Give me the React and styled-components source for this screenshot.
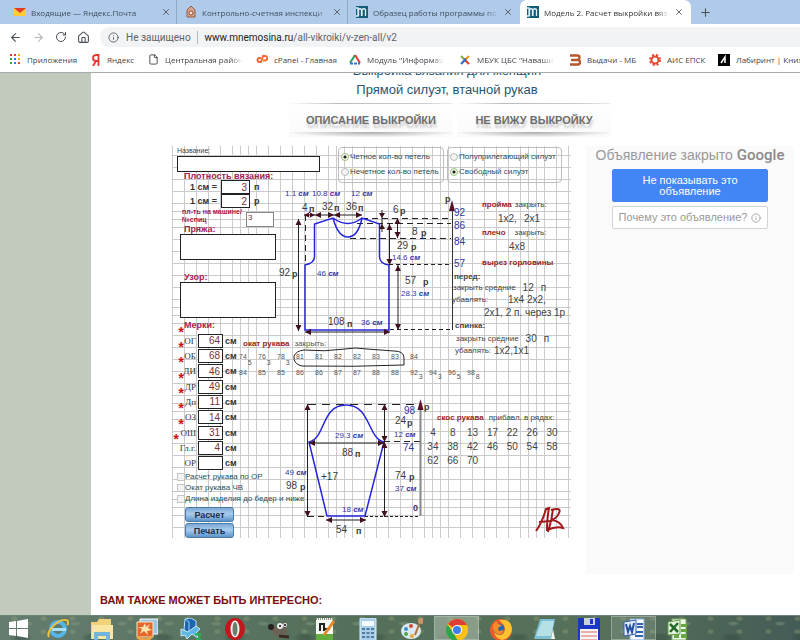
import React from "react";
import styled, { createGlobalStyle, css } from "styled-components";
import { ArrowLeft, ArrowRight, RotateCw, House, Info, X, Plus, File } from "lucide-react";

const Global = createGlobalStyle`
  * { box-sizing: border-box; }
  body { margin: 0; background: #fff; font-family: "Liberation Sans", Arial, sans-serif; }
  button, input, textarea { font-family: inherit; }
`;

/* ---------- browser frame ---------- */
const Window = styled.div`
  display: flex;
  flex-direction: column;
  height: 100vh;
  overflow: hidden;
`;
const TabStrip = styled.nav`
  display: flex;
  flex: 0 0 24px;
  padding-left: 7px;
  background: #afcbe9;
  font-family: "Open Sans", "Noto Sans", sans-serif;
`;
const Tab = styled.div`
  display: flex;
  align-items: center;
  gap: 5px;
  flex: 0 1 171px;
  min-width: 0;
  padding: 0 7px;
  font-size: 8px;
  color: #3f4d5d;
  ${(p) => p.$divider && css`box-shadow: inset -1px 0 #afcbe9, inset -2px 0 #8ea9c6;`}
  ${(p) => p.$active && css`background: #fff; border-radius: 7px 7px 0 0; color: #333;`}
`;
const fade = css`
  overflow: hidden;
  white-space: nowrap;
  mask-image: linear-gradient(to right, #000 calc(100% - 12px), transparent);
`;
const TabTitle = styled.span`
  flex: 1;
  min-width: 0;
  ${fade}
`;
const IconButton = styled.button`
  display: flex;
  align-items: center;
  justify-content: center;
  flex: none;
  padding: 0;
  border: 0;
  background: none;
  color: ${(p) => p.$color || "#4a4f55"};
`;
const NewTab = styled(IconButton)`
  width: 29px;
`;
const Toolbar = styled.div`
  display: flex;
  align-items: center;
  gap: 10px;
  flex: 0 0 25px;
  padding: 1px 0 0 9px;
`;
const Address = styled.div`
  display: flex;
  align-items: center;
  gap: 7px;
  flex: 1;
  height: 20px;
  padding-left: 8px;
  border-radius: 10px 0 0 10px;
  background: #f1f3f4;
  font: 10px Roboto, sans-serif;
  color: #5f6368;
`;
const Security = styled.span`
  padding-right: 6px;
  border-right: 1px solid #b5b8bb;
  line-height: 13px;
`;
const Url = styled.span`
  b { font-weight: 400; color: #222; }
`;
const Bookmarks = styled.nav`
  display: flex;
  align-items: center;
  flex: 0 0 24px;
  padding: 0 0 2px 10px;
  border-bottom: 1px solid #a9abad;
  font-family: "Open Sans", "Noto Sans", sans-serif;
  overflow: hidden;
`;
const Bookmark = styled.a`
  display: flex;
  align-items: center;
  gap: 6px;
  flex: 0 0 ${(p) => p.$w}px;
  min-width: 0;
  padding-right: ${(p) => (p.$fade ? 10 : 0)}px;
  font-size: 8px;
  color: #3f4348;
  text-decoration: none;
  white-space: nowrap;
  svg { flex: none; }
  span { min-width: 0; ${(p) => p.$fade && fade} }
`;

/* ---------- page ---------- */
const Page = styled.div`
  display: flex;
  flex: 1;
  min-height: 0;
  overflow: hidden;
`;
const Side = styled.aside`
  flex: 0 0 91px;
  background: #c1cabd;
`;
const Main = styled.main`
  flex: 1;
  min-width: 0;
  overflow: hidden;
`;
const Title = styled.h1`
  margin: -12px 0 0;
  padding-left: 3px;
  font-size: 13px;
  line-height: 19px;
  font-weight: 400;
  text-align: center;
  color: #265574;
`;
const Actions = styled.div`
  display: flex;
  justify-content: center;
  gap: 4px;
  margin: 4px 0 9px;
  padding-left: 9px;
`;
const Action = styled.a`
  width: ${(p) => p.$w}px;
  height: 34px;
  background:
    linear-gradient(to right, transparent, #bbb 30%, #ccc 80%, #eee) top / 100% 1px no-repeat,
    radial-gradient(ellipse at center top, #aaa, transparent 75%) bottom / 100% 5px no-repeat,
    linear-gradient(#fff, #fafafa);
  font-size: 11px;
  font-weight: 700;
  line-height: 34px;
  text-align: center;
  text-decoration: none;
  color: #6e6e6e;
  text-shadow: 1px 4px 2px #ccc;
`;
const Content = styled.div`
  display: flex;
  align-items: flex-start;
  gap: 15px;
  padding: 0 6px 0 81px;
`;
const More = styled.h2`
  margin: 19px 0 0 9px;
  font-size: 11px;
  line-height: 14px;
  color: #7a0c0c;
`;

const steps = [0, 8, 16, 24, 36, 48, 60, 72, 84];
const ruling = (dir) =>
  `repeating-linear-gradient(${dir}, ${steps
    .map((s, i) => `#cbcbcb ${s}px ${s + 1}px, transparent ${s + 1}px ${steps[i + 1] || 96}px`)
    .join(", ")})`;
const Paper = styled.form`
  display: flex;
  flex: 0 0 399px;
  background-image: ${ruling("to right")}, ${ruling("to bottom")};
  background-position: -36px 0, 0 -39px;
  background-size: 480px 100%, 100% 480px;
`;

/* ---------- form column ---------- */
const Fields = styled.div`
  display: flex;
  flex-direction: column;
  align-items: flex-start;
  flex: 0 0 66px;
  width: 66px;
  padding-left: 5px;
  white-space: nowrap;
  > * { flex: none; }
`;
const boxed = css`
  display: block;
  padding: 0 2px;
  border: 1px solid #222;
  background: #fff;
  color: #7c3038;
  font-size: 10px;
  outline: 0;
  resize: none;
`;
const SmallLabel = styled.label`
  font-size: 7px;
  line-height: 10px;
  color: #444;
`;
const NameInput = styled.input`
  ${boxed}
  width: 143px;
  height: 16px;
`;
const Heading = styled.label`
  padding-top: ${(p) => p.$top || 0}px;
  padding-left: 7px;
  font-size: 9px;
  font-weight: 700;
  line-height: ${(p) => p.$h || 10}px;
  color: #a8204e;
`;
const Density = styled.label`
  display: flex;
  align-items: center;
  gap: 4px;
  height: 14px;
  padding-left: 13px;
  font-size: 9px;
  font-weight: 700;
  color: #333;
`;
const NumberInput = styled.input`
  ${boxed}
  width: ${(p) => p.$w || 25}px;
  height: 14px;
  text-align: right;
`;
const Needles = styled.label`
  display: flex;
  gap: 4px;
  height: 16px;
  padding-left: 5px;
  font-size: 7px;
  font-weight: 700;
  line-height: 8px;
  color: #a8204e;
`;
const NeedleInput = styled.input`
  ${boxed}
  width: 28px;
  height: 15px;
  margin-top: 4px;
  padding: 0 1px 4px;
  border-color: #888;
  font-size: 8px;
`;
const Area = styled.textarea`
  ${boxed}
  width: 96px;
  height: ${(p) => p.$h}px;
  margin-left: 3px;
`;
const Measures = styled.div`
  display: grid;
  grid-auto-rows: 1fr;
  height: 138px;
`;
const Measure = styled.label`
  display: grid;
  grid-template-columns: 19px 25px auto;
  gap: 2px;
  align-items: center;
  font-size: 9px;
  font-weight: 700;
  color: #333;
`;
const MeasureName = styled.span`
  position: relative;
  display: flex;
  justify-content: flex-end;
  font: 9px "Liberation Serif", serif;
  line-height: 14px;
`;
const Star = styled.i`
  position: absolute;
  left: ${(p) => (p.$wide ? "-5px" : "0")};
  top: -8px;
  font: 700 14px "Liberation Mono", monospace;
  color: #c11;
`;
const Check = styled.label`
  display: flex;
  align-items: center;
  height: 11px;
  font-size: 8px;
  color: #285058;
  input {
    appearance: none;
    width: 8px;
    height: 8px;
    margin: 0;
    border: 1px solid #c6c6c6;
    background: #f3f3f3;
  }
`;
const Submit = styled.button`
  width: 49px;
  height: 15px;
  margin: ${(p) => p.$top}px 0 0 8px;
  padding: 0;
  border: 1px solid #4a7ba8;
  border-radius: 3px;
  background: linear-gradient(#7ba9d4, #a9cdee 45%, #5b94cc);
  font-size: 9px;
  font-weight: 700;
  line-height: 12px;
  color: #1c2c44;
`;

/* ---------- drawings ---------- */
const Middle = styled.div`
  flex: 0 0 185px;
  width: 185px;
`;
const Options = styled.div`
  display: flex;
  gap: 3px;
  height: 38px;
  padding: 1px 0 1px 100px;
`;
const Group = styled.fieldset`
  display: flex;
  flex-direction: column;
  justify-content: space-evenly;
  flex: 0 0 ${(p) => p.$w}px;
  margin: 0;
  padding: 0 0 1px 2px;
  border: 1px solid #bdbdbd;
  border-radius: 4px;
`;
const Radio = styled.label`
  display: flex;
  align-items: center;
  gap: 1px;
  font-size: 8px;
  line-height: 12px;
  color: #285058;
  white-space: nowrap;
  input {
    appearance: none;
    flex: none;
    width: 8px;
    height: 8px;
    margin: 0;
    border: 1px solid #b5bcae;
    border-radius: 50%;
    background: #f4f4f4;
  }
  input:checked {
    background: radial-gradient(#222 0 1px, #f5f9ee 2px);
    border-color: #9bc07c;
  }
`;
const Drawing = styled.svg`
  display: block;
  overflow: visible;
  pointer-events: none;
  font-family: "Liberation Sans", Arial, sans-serif;
`;
const Red = styled.b`
  color: #9c1c22;
`;
const CapRows = styled.section`
  position: relative;
  height: 59px;
  padding-left: 1px;
  font-size: 8px;
  color: #555;
  white-space: nowrap;
`;
const CapTitle = styled.div`
  display: flex;
  gap: 5px;
  padding-left: 4px;
  line-height: 12px;
`;
const CapRow = styled.div`
  display: flex;
  height: 16px;
`;
const CapCell = styled.span`
  flex: 0 0 19px;
  display: flex;
  font-size: 7px;
  line-height: 14px;
  sub {
    padding-left: 1px;
    vertical-align: baseline;
    font-size: 7px;
    line-height: ${(p) => (p.$low ? 26 : 22)}px;
  }
`;
const Ring = styled.svg`
  position: absolute;
  left: 55px;
  top: 10px;
  overflow: visible;
`;

/* ---------- instructions ---------- */
const Right = styled.div`
  flex: 1;
  min-width: 0;
  display: flex;
  flex-direction: column;
  padding-top: 51px;
  white-space: nowrap;
  > * { flex: none; }
`;
const Note = styled.div`
  display: flex;
  align-items: center;
  gap: ${(p) => p.$gap || 3}px;
  height: ${(p) => p.$h || 14}px;
  padding-left: ${(p) => p.$x}px;
  font-size: 8px;
  color: #444;
`;
const Big = styled.span`
  font-size: 10px;
`;
const SlopeTitle = styled(Note)`
  margin-top: 54px;
`;
const Slope = styled.table`
  width: 139px;
  margin-top: 1px;
  border-collapse: collapse;
  table-layout: fixed;
  font-size: 10px;
  color: #444;
  td { height: 14px; padding: 0; text-align: center; }
`;
const Signature = styled.svg`
  margin: auto 6px 4px auto;
`;

/* ---------- advert ---------- */
const Ad = styled.aside`
  display: flex;
  flex-direction: column;
  align-items: center;
  gap: 4px;
  flex: 1;
  min-width: 0;
  height: 428px;
  background: #fafafa;
  white-space: nowrap;
`;
const AdTitle = styled.div`
  display: flex;
  align-items: baseline;
  gap: 4px;
  font-size: 14px;
  line-height: 19px;
  color: #999;
  b { font: 500 15px Roboto, sans-serif; line-height: 19px; color: #8a8a8a; }
`;
const AdButton = styled.button`
  display: flex;
  align-items: center;
  justify-content: center;
  gap: 4px;
  width: 156px;
  height: ${(p) => (p.$primary ? 33 : 23)}px;
  padding: 0;
  border: 1px solid ${(p) => (p.$primary ? "#4285f4" : "#d4d4d4")};
  border-radius: 2px;
  background: ${(p) => (p.$primary ? "#4285f4" : "#fff")};
  color: ${(p) => (p.$primary ? "#fff" : "#999")};
  font-size: 11px;
  line-height: 11px;
`;

/* ---------- taskbar ---------- */
const Taskbar = styled.footer`
  display: flex;
  flex: 0 0 25px;
  overflow: hidden;
  background:
    radial-gradient(ellipse at 60% 40%, #8ba08466 0 3px, transparent 6px) 0 0 / 47px 19px,
    radial-gradient(ellipse at 30% 70%, #2f473a66 0 5px, transparent 12px) 0 0 / 71px 31px,
    radial-gradient(ellipse at 50% 20%, #a3a87855 0 2px, transparent 4px) 0 0 / 29px 13px,
    linear-gradient(to right, #657d70, #54705a 40%, #56705a 75%, #445c56);
  border-top: 1px solid #718577;
`;
const StartButton = styled(IconButton)`
  width: 36px;
`;
const Apps = styled.div`
  display: flex;
  flex: 0 1 664px;
`;
const AppButton = styled.button`
  display: flex;
  justify-content: center;
  flex: 1;
  padding: 2px 0 0;
  border: 0;
  background: ${(p) => (p.$active ? "#aab9aa99" : p.$open ? "#8fa39055" : "none")};
  box-shadow: ${(p) => (p.$active || p.$open ? "inset 0 0 0 1px #b9c7b988" : "none")};
`;

function MnIcon() {
  return (
    <svg width="12" height="12" viewBox="0 0 12 12" aria-hidden="true">
      <rect width="12" height="12" fill="#145c78" />
      <path d="M0 2h2v8H0M2.5 10V3.5Q4 2 5.5 3.5V10M6 10V3.5Q8 2 9.5 3.5V10" fill="none" stroke="#dff0f5" strokeWidth="1.3" />
    </svg>
  );
}

const tabs = [
  {
    title: "Входящие — Яндекс.Почта",
    divider: true,
    icon: (
      <svg width="12" height="12" viewBox="0 0 12 12"><path d="M0 2h12v8H0z" fill="#fc3" /><path d="M0 2h12L6 7z" fill="#e23a2e" /></svg>
    ),
  },
  {
    title: "Контрольно-счетная инспекци",
    divider: true,
    icon: (
      <svg width="12" height="12" viewBox="0 0 12 12"><path d="M2 4l4-4 4 4v7H2z" fill="#d8a58c" stroke="#8f5b45" /><circle cx="6" cy="7" r="2" fill="#f5e5d8" stroke="#93503a" /></svg>
    ),
  },
  { title: "Образец работы программы по", icon: <MnIcon /> },
  { title: "Модель 2. Расчет выкройки вяз", active: true, icon: <MnIcon /> },
];

const dotColors = ["#e34133", "#e34133", "#f0b400", "#3b9e52", "#3776e0", "#f0b400", "#3b9e52", "#3776e0", "#e34133"];
const bookmarks = [
  { w: 81, text: "Приложения", icon: (
    <svg width="11" height="11" viewBox="0 0 11 11">{dotColors.map((c, i) => <rect key={i} x={(i % 3) * 4} y={Math.floor(i / 3) * 4} width="2" height="2" fill={c} />)}</svg>
  ) },
  { w: 57, text: "Яндекс", icon: (
    <svg width="10" height="12" viewBox="0 0 10 12"><path d="M7.5 12V1H5.5Q2 1 2 4T5 7H7M5 7L2 12" fill="none" stroke="#e8352b" strokeWidth="1.8" /></svg>
  ) },
  { w: 108, text: "Центральная район", fade: true, icon: <File size={11} color="#444" /> },
  { w: 93, text: "cPanel - Главная", icon: (
    <svg width="12" height="10" viewBox="0 0 12 10"><path d="M5 3H3.5a2 2 0 0 0 0 4H5L7 1H9a2 2 0 0 1 0 4.5H7" fill="none" stroke="#f26b35" strokeWidth="2" /></svg>
  ) },
  { w: 110, text: "Модуль \"Информац", fade: true, icon: (
    <svg width="12" height="11" viewBox="0 0 12 11" fill="none" strokeWidth="2"><path d="M6 1L1 9" stroke="#29a06a" /><path d="M6 1l5 8" stroke="#e23b35" /><path d="M1 9.5h10" stroke="#2d77c8" strokeDasharray="3 1" /></svg>
  ) },
  { w: 111, text: "МБУК ЦБС \"Наваши", fade: true, icon: (
    <svg width="12" height="12" viewBox="0 0 12 12" fill="none" strokeWidth="2.2"><path d="M2 2l5 5" stroke="#7ab342" /><path d="M10 2L5 7" stroke="#f39322" /><path d="M10 10L5 5" stroke="#e3402f" /><path d="M2 10l5-5" stroke="#2c6fc0" /></svg>
  ) },
  { w: 79, text: "Выдачи - МБ", icon: (
    <svg width="11" height="12" viewBox="0 0 11 12"><path d="M0 1.5h7.5q2 0 2 2t-2 2.500H1M4 6h4q2 0 2 2.200t-2 2.300H0" fill="none" stroke="#b3592d" strokeWidth="2.400" /></svg>
  ) },
  { w: 69, text: "АИС ЕПСК", icon: (
    <svg width="12" height="12" viewBox="0 0 12 12" fill="none" stroke="#e5482f"><circle cx="6" cy="6" r="3.500" strokeWidth="2" /><circle cx="6" cy="6" r="5" strokeWidth="2" strokeDasharray="2 2" /></svg>
  ) },
  { w: 110, text: "Лабиринт | Книж", icon: (
    <svg width="12" height="12" viewBox="0 0 12 12"><rect width="12" height="12" fill="#050505" /><path d="M3 9l4-6v6" fill="none" stroke="#fff" strokeWidth="1.500" /></svg>
  ) },
];

/* A measured line with solid heads at both ends. */
function Arrow({ x1, y1, x2, y2 }) {
  const vertical = x1 === x2;
  const head = (x, y, s) =>
    vertical ? `M${x} ${y}l-3 ${6 * s}h6z` : `M${x} ${y}l${6 * s} -3v6z`;
  return (
    <g>
      <path d={`M${x1} ${y1}L${x2} ${y2}`} stroke="#222" strokeWidth="1" />
      <path d={head(x1, y1, 1) + head(x2, y2, -1)} fill="#40101f" />
    </g>
  );
}
const Txt = styled.text`
  font-size: ${(p) => p.$s || 10}px;
  fill: ${(p) => (p.$blue ? "#3434a0" : "#3b3b3b")};
  font-weight: ${(p) => (p.$bold ? 700 : 400)};
`;
function Cm({ x, y, v }) {
  return (
    <Txt x={x} y={y} $s={8} $blue>
      {v} <tspan fontWeight="700" fontStyle="italic">см</tspan>
    </Txt>
  );
}
function Unit({ x, y, v, u, ux, uy }) {
  return (
    <>
      <Txt x={x} y={y}>{v}</Txt>
      <Txt x={ux} y={uy || y + 1} $s={9} $bold>{u}</Txt>
    </>
  );
}

function Shirt() {
  return (
    <Drawing width="185" height="154" viewBox="238 184 185 154">
      <g stroke="#222" strokeDasharray="6 4">
        <path d="M305.500 215V264M362 218.500H451M357 223.500H451M350 238.500H451" />
        <path d="M389 264.500H451M390 329.500H451" strokeDasharray="4 3" />
      </g>
      <path
        d="M305 330V265Q314.500 263 314.500 257V224L333 218Q348 229 362 218L379.500 224V257Q380 264 389 265V330ZM333 218Q338 237 348 237T362 218"
        fill="none" stroke="#2424dc" strokeWidth="1.500"
      />
      <Arrow x1={304} y1={215} x2={315} y2={215} />
      <Arrow x1={315} y1={215} x2={334} y2={215} />
      <Arrow x1={334} y1={215} x2={362} y2={215} />
      <Arrow x1={298.500} y1={219} x2={298.500} y2={331} />
      <Arrow x1={305} y1={332} x2={390} y2={332} />
      <Arrow x1={397.500} y1={218} x2={397.500} y2={238} />
      <Arrow x1={389.500} y1={224} x2={389.500} y2={265} />
      <Arrow x1={398} y1={265} x2={398} y2={330} />
      <path d="M382 210v22" stroke="#222" />
      <path d="M382 218l-3-5h6zM382 224l-3 5h6z" fill="#40101f" />
      <path d="M452.500 204V330" stroke="#333" />
      <path d="M452 200l-3 11h6z" fill="#5a1028" />
      <Cm x={285} y={196} v="1.1" />
      <Cm x={312} y={196} v="10.8" />
      <Cm x={351} y={196} v="12" />
      <Unit x={302} y={211} v="4" u="п" ux={309} />
      <Unit x={322} y={210} v="32" u="п" ux={334} />
      <Unit x={346} y={210} v="36" u="п" ux={358} />
      <Unit x={393} y={213} v="6" u="р" ux={400} />
      <Unit x={412} y={235} v="8" u="р" ux={421} />
      <Unit x={397} y={249} v="29" u="р" ux={411} />
      <Cm x={392} y={260} v="14.6" />
      <Unit x={405} y={284} v="57" u="р" ux={423} />
      <Cm x={401} y={296} v="28.3" />
      <Unit x={279} y={276} v="92" u="р" ux={292} />
      <Cm x={317} y={276} v="46" />
      <Unit x={328} y={325} v="108" u="п" ux={347} uy={327} />
      <Cm x={361} y={325} v="36" />
      <Txt x={445} y={202} $s={9} $bold>р</Txt>
      <Txt x={454} y={216} $blue>92</Txt>
      <Txt x={454} y={229} $blue>86</Txt>
      <Txt x={454} y={245} $blue>84</Txt>
      <Txt x={454} y={267} $blue>57</Txt>
    </Drawing>
  );
}

function Sleeve() {
  return (
    <Drawing width="185" height="141" viewBox="238 397 185 141">
      <g stroke="#222">
        <path d="M308 404.500H420" strokeDasharray="8 6" />
        <path d="M384 441.500H420M308 516.500H327" strokeDasharray="6 4" />
        <path d="M365 516.500H420" strokeDasharray="3 2" />
      </g>
      <path
        d="M309 442C326 438 321 405 346 405S367 438 384 442L365 516H327Z"
        fill="none" stroke="#2424dc" strokeWidth="1.500"
      />
      <Arrow x1={307.500} y1={404} x2={307.500} y2={517} />
      <Arrow x1={309} y1={443} x2={384} y2={443} />
      <Arrow x1={384.500} y1={404} x2={384.500} y2={442} />
      <Arrow x1={384.500} y1={442} x2={384.500} y2={517} />
      <Arrow x1={326} y1={520} x2={366} y2={520} />
      <path d="M420.500 404V516" stroke="#888" strokeWidth="2" />
      <path d="M420.500 399l-3 11h6z" fill="#5a1028" />
      <Txt x={424} y={410} $s={9} $bold>р</Txt>
      <Txt x={404} y={414} $blue>98</Txt>
      <Unit x={395} y={424} v="24" u="р" ux={407} uy={426} />
      <Cm x={394} y={437} v="12" />
      <Txt x={403} y={451} $blue>74</Txt>
      <Unit x={395} y={479} v="74" u="р" ux={409} />
      <Cm x={395} y={491} v="37" />
      <Txt x={413} y={511} $s={9} $bold>0</Txt>
      <Cm x={335} y={438} v="29.3" />
      <Unit x={342} y={456} v="88" u="п" ux={355} />
      <Txt x={321} y={480}>+17</Txt>
      <Cm x={285} y={475} v="49" />
      <Unit x={286} y={489} v="98" u="р" ux={300} />
      <Cm x={342} y={512} v="18" />
      <Unit x={336} y={533} v="54" u="п" ux={356} />
    </Drawing>
  );
}

const measures = [
  ["ОГ", "64"], ["ОБ", "68"], ["ДИ", "46"], ["ДР", "49"], ["Дп", "11"],
  ["ОЗ", "14"], ["ОШ", "31"], ["Гл.г.", "4"], ["ОР", ""],
];
const capOne = [["74", "5"], ["76", "3"], ["78", "3"], ["81"], ["81"], ["82"], ["82"], ["83"], ["83"], ["84"]];
const capTwo = [["84"], ["85"], ["85"], ["86"], ["86"], ["87"], ["87"], ["88"], ["88"], ["92", "3"], ["94", "3"], ["96", "5"], ["98", "8"]];
const slope = [[4, 8, 13, 17, 22, 26, 30], [34, 38, 42, 46, 50, 54, 58], [62, 66, 70, "", "", "", ""]];

const apps = [
  ["Internet Explorer", <><circle cx="11" cy="11" r="7" fill="none" stroke="#54b5ea" strokeWidth="4" /><path d="M5 11.500h14" stroke="#a7e0fa" strokeWidth="3" /><path d="M2 19C-2 13 14-2 21 3q1 2-1 4" fill="none" stroke="#efc23c" strokeWidth="2" /></>],
  ["Проводник", <><path d="M0 4h6l2-3h12v20H0z" fill="#f1d27a" /><path d="M1 7h21v14H1z" fill="#f9e6a3" /><path d="M3 22v-8h16v8h-4v-4H7v4z" fill="#74b4d8" /></>],
  ["Просмотр рисунков", <><path d="M4 1h18v15H4z" fill="#9cc4de" stroke="#fff" /><path d="M1 4h16v15H1z" fill="#e5652b" stroke="#fbe6c0" /><path d="M9 5l1 4 4-3-2 4 4 2-5 1 1 4-4-4-4 3 2-5-4-2 5 0z" fill="#ffe4ab" /><path d="M1 19q10 6 15-1" stroke="#f0a040" strokeWidth="3" fill="none" /></>],
  ["Сеть", <><path d="M5 1l6-1 5 3v11l-7 2-5-4z" fill="#1c65b0" stroke="#b9e1fa" /><path d="M5 1l4 3v12" stroke="#9cd3f5" fill="none" /><path d="M1 11l7 3 8-6 4 3-4 4 2 5-6-4-5 5-2-4-4 1z" fill="#5eb6e3" stroke="#cbeafb" /><path d="M15 17q6-3 5 1l-3 4h5" stroke="#27b34b" strokeWidth="2" fill="none" /></>],
  ["Opera", <><ellipse cx="11" cy="11" rx="10" ry="11" fill="#c5161d" /><ellipse cx="11" cy="11" rx="4.500" ry="8.500" fill="#f6eeee" /><ellipse cx="11" cy="11" rx="2.500" ry="7" fill="#657f6b" /></>],
  ["GIMP", <><path d="M2 8q6 2 10-1l5-5 2 9q-1 8-8 8-7-1-9-11" fill="#6b6257" /><circle cx="3" cy="9" r="3" fill="#26211d" /><circle cx="12" cy="8" r="3" fill="#eee" /><circle cx="17" cy="7" r="2" fill="#eee" /><circle cx="12" cy="8" r="1" /><circle cx="17" cy="7" r="1" /><path d="M11 18l10 1" stroke="#3a2a21" strokeWidth="3" /></>],
  ["Редактор", <><path d="M3 0h17v21H3z" fill="#f5f8ef" /><path d="M3 16h17v6H3z" fill="#61ad3e" /><path d="M7 13V6h4v7m1-2h5" fill="none" stroke="#222" strokeWidth="2" /><path d="M11 17L21 3" stroke="#e48a2d" strokeWidth="3" /><path d="M3 1h17" stroke="#333" strokeDasharray="1 1" /></>],
  ["Калькулятор", <><rect x="3" width="16" height="24" rx="1" fill="#a9cee9" stroke="#d9edf8" /><path d="M5 3h12v5H5z" fill="#f4faff" /><path d="M5 11h12M5 15h12M5 19h12" stroke="#517b9d" strokeWidth="2" strokeDasharray="3 1.500" /></>],
  ["Paint", <><ellipse cx="10" cy="13" rx="10" ry="8" fill="#dce8f0" /><circle cx="5" cy="11" r="2" fill="#3b92c8" /><circle cx="10" cy="8" r="2" fill="#d5453c" /><circle cx="5" cy="16" r="2" fill="#4ba747" /><circle cx="11" cy="18" r="2" fill="#e3ab30" /><path d="M14 17L19 4" stroke="#ad6d3b" strokeWidth="2" /><circle cx="20" cy="3" r="3" fill="#c89666" /></>],
  ["Chrome", <><circle cx="11" cy="12" r="11" fill="#fbc116" /><path d="M11 12L2 6A11 11 0 0 1 21 7H11z" fill="#de3e35" /><path d="M1.500 6.500L8 16l4 7A11 11 0 0 1 1.500 6.500" fill="#2da44f" /><circle cx="11" cy="12" r="5" fill="#fff" /><circle cx="11" cy="12" r="4" fill="#3f80e8" /></>],
  ["Firefox", <><circle cx="11" cy="12" r="11" fill="#f0592c" /><path d="M9 2q12-2 13 9-1 9-10 11-7-2-8-8 4 5 9 2 5-7-4-14" fill="#fdc22d" /><circle cx="9" cy="11" r="5.500" fill="#2567b2" /><path d="M3 7l3-4 2 3 4 1-4 3 1 3 5-1q-2 6-7 4-5-3-4-9" fill="#f78b25" /></>],
  ["Блокнот", <><path d="M6 1h15l-4 20H0z" fill="#7bc0d4" /><path d="M8 3h12l-3 15H2z" fill="#b4e0e6" /><path d="M17 21l2-10 2 10z" fill="#f2f5f0" /></>],
  ["Диск", <><rect width="22" height="24" rx="1" fill="#1b35c4" /><path d="M6 0h11v7H6z" fill="#c9d3e0" /><path d="M12 1h3v5h-3z" fill="#1b35c4" /><path d="M2 11h18v13H2z" fill="#f8f5f5" /><path d="M3 14h16M3 18h16M3 22h16" stroke="#d96c65" /></>],
  ["Word", <><path d="M7 1h14v21H7z" fill="#f5f8fd" stroke="#8faedb" /><path d="M14 6h6M14 9h6M12 14h8M12 18h8" stroke="#3562b0" strokeWidth="2" /><path d="M1 4l12-2v14L1 18z" fill="#e5edf9" stroke="#3260ae" /><path d="M3 6l2 8 2-6 2 6 2-9" fill="none" stroke="#2450a0" strokeWidth="2" /></>],
  ["Excel", <><path d="M5 1h14v21H5z" fill="#edf7e7" stroke="#79af61" /><path d="M14 6h6v3h-6zM14 11h6v3h-6zM7 16h5v4H7zM14 16h6v4h-6z" fill="#66a744" /><path d="M1 4l12-2v14L1 17z" fill="#e7f4df" stroke="#5e9c43" /><path d="M3 6l8 8M11 5l-8 9" stroke="#246b2c" strokeWidth="2.500" /></>],
];

export default function App() {
  return (
    <Window>
      <Global />
      <TabStrip>
        {tabs.map((t) => (
          <Tab key={t.title} $active={t.active} $divider={t.divider}>
            {t.icon}
            <TabTitle>{t.title}</TabTitle>
            <IconButton aria-label="Закрыть вкладку"><X size={10} /></IconButton>
          </Tab>
        ))}
        <NewTab aria-label="Новая вкладка"><Plus size={13} /></NewTab>
      </TabStrip>
      <Toolbar>
        <IconButton aria-label="Назад"><ArrowLeft size={13} /></IconButton>
        <IconButton aria-label="Вперед" $color="#b3b5b7"><ArrowRight size={13} /></IconButton>
        <IconButton aria-label="Обновить"><RotateCw size={12} /></IconButton>
        <IconButton aria-label="Домой"><House size={13} /></IconButton>
        <Address>
          <Info size={11} />
          <Security>Не защищено</Security>
          <Url><b>www.mnemosina.ru</b>/all-vikroiki/v-zen-all/v2</Url>
        </Address>
      </Toolbar>
      <Bookmarks>
        {bookmarks.map((b) => (
          <Bookmark key={b.text} href="#" $w={b.w} $fade={b.fade}>{b.icon}<span>{b.text}</span></Bookmark>
        ))}
      </Bookmarks>
      <Page>
        <Side />
        <Main>
          <Title>Выкройка вязания для женщин<br />Прямой силуэт, втачной рукав</Title>
          <Actions>
            <Action href="#" $w={164}>ОПИСАНИЕ ВЫКРОЙКИ</Action>
            <Action href="#" $w={154}>НЕ ВИЖУ ВЫКРОЙКУ</Action>
          </Actions>
          <Content>
            <Paper onSubmit={(e) => e.preventDefault()}>
              <Fields>
                <SmallLabel htmlFor="name">Название:</SmallLabel>
                <NameInput id="name" />
                <Heading as="span" $h={8}>Плотность вязания:</Heading>
                <Density>1 см = <NumberInput $w={29} defaultValue="3" /> п</Density>
                <Density>1 см = <NumberInput $w={29} defaultValue="2" /> р</Density>
                <Needles><span>пл-ть на машине/<br />№спиц</span><NeedleInput defaultValue="3" /></Needles>
                <Heading htmlFor="yarn">Пряжа:</Heading>
                <Area id="yarn" $h={26} />
                <Heading htmlFor="stitch" $top={12}>Узор:</Heading>
                <Area id="stitch" $h={36} />
                <Heading as="span" $h={15}>Мерки:</Heading>
                <Measures>
                  {measures.map(([n, v]) => (
                    <Measure key={n}>
                      <MeasureName>{n !== "ОР" && <Star $wide={n === "Гл.г."}>*</Star>}{n}</MeasureName>
                      <NumberInput defaultValue={v} />
                      см
                    </Measure>
                  ))}
                </Measures>
                <Check><input type="checkbox" />Расчет рукава по ОР</Check>
                <Check><input type="checkbox" />Окат рукава ЧВ</Check>
                <Check><input type="checkbox" />Длина изделия до бедер и ниже</Check>
                <Submit $top={3}>Расчет</Submit>
                <Submit type="button" $top={1}>Печать</Submit>
              </Fields>
              <Middle>
                <Options>
                  <Group $w={106}>
                    <Radio><input type="radio" name="loops" defaultChecked />Четное кол-во петель</Radio>
                    <Radio><input type="radio" name="loops" />Нечетное кол-во петель</Radio>
                  </Group>
                  <Group $w={115}>
                    <Radio><input type="radio" name="fit" />Полуприлегающий силуэт</Radio>
                    <Radio><input type="radio" name="fit" defaultChecked />Свободный силуэт</Radio>
                  </Group>
                </Options>
                <Shirt />
                <CapRows>
                  <CapTitle><Red>окат рукава</Red>закрыть:</CapTitle>
                  <CapRow>{capOne.map(([a, b], i) => <CapCell key={i} $low>{a}{b && <sub>{b}</sub>}</CapCell>)}</CapRow>
                  <CapRow>{capTwo.map(([a, b], i) => <CapCell key={i}>{a}{b && <sub>{b}</sub>}</CapCell>)}</CapRow>
                  <Ring width="112" height="20" viewBox="0 0 112 20">
                    <path d="M11 2Q31 4 52 1Q62-1 74 1L101 3Q111 3 111 10V17Q62 19 9 18Q0 16 1 8Q3 3 11 2Z" fill="none" stroke="#222" />
                  </Ring>
                </CapRows>
                <Sleeve />
              </Middle>
              <Right>
                <Note $x={59}><Red>пройма</Red> закрыть:</Note>
                <Note $x={75} $gap={7}><Big>1x2,</Big><Big>2x1</Big></Note>
                <Note $x={59} $gap={9}><Red>плечо</Red> закрыть:</Note>
                <Note $x={86} $h={15}><Big>4x8</Big></Note>
                <Note $x={59} $h={16}><Red>вырез горловины</Red></Note>
                <Note $x={31} $h={12}><b>перед:</b></Note>
                <Note $x={30} $h={10} $gap={7}>закрыть средние <Big>12</Big><Big>п</Big></Note>
                <Note $x={29} $gap={20}>убавлять: <Big>1x4 2x2,</Big></Note>
                <Note $x={61} $h={12}><Big>2x1, 2 п. через 1р</Big></Note>
                <Note $x={32}><b>спинка:</b></Note>
                <Note $x={33} $h={12} $gap={7}>закрыть средние <Big>30</Big><Big>п</Big></Note>
                <Note $x={32} $h={12}>убавлять: <Big>1x2,1x1</Big></Note>
                <SlopeTitle $x={14} $gap={5}><Red>скос рукава</Red> прибавл. в рядах:</SlopeTitle>
                <Slope>
                  <tbody>
                    {slope.map((r, i) => <tr key={i}>{r.map((n, j) => <td key={j}>{n}</td>)}</tr>)}
                  </tbody>
                </Slope>
                <Signature width="30" height="28" viewBox="0 0 30 28" aria-label="АВ">
                  <path d="M1 25Q7 17 11 3L14 2Q12 12 12 25M4 16L17 15M18 3Q17 14 13 26M16 4Q27 1 24 7Q22 12 17 14Q25 15 28 22Q21 20 12 24" fill="none" stroke="#a0181c" strokeWidth="2" />
                </Signature>
              </Right>
            </Paper>
            <Ad>
              <AdTitle>Объявление закрыто <b>Google</b></AdTitle>
              <AdButton $primary>Не показывать это<br />объявление</AdButton>
              <AdButton>Почему это объявление? <Info size={10} /></AdButton>
            </Ad>
          </Content>
          <More>ВАМ ТАКЖЕ МОЖЕТ БЫТЬ ИНТЕРЕСНО:</More>
        </Main>
      </Page>
      <Taskbar>
        <StartButton aria-label="Пуск">
          <svg width="19" height="19" viewBox="0 0 19 19"><path d="M0 3l7-1v7H0zM8 2l11-2v9H8zM0 10h7v7l-7-1zM8 10h11v9L8 17z" fill="#fff" /></svg>
        </StartButton>
        <Apps>
          {apps.map(([name, art]) => (
            <AppButton key={name} aria-label={name} $active={name === "Chrome"} $open={name === "Word"}>
              <svg width="22" height="24" viewBox="0 0 22 24">{art}</svg>
            </AppButton>
          ))}
        </Apps>
      </Taskbar>
    </Window>
  );
}
